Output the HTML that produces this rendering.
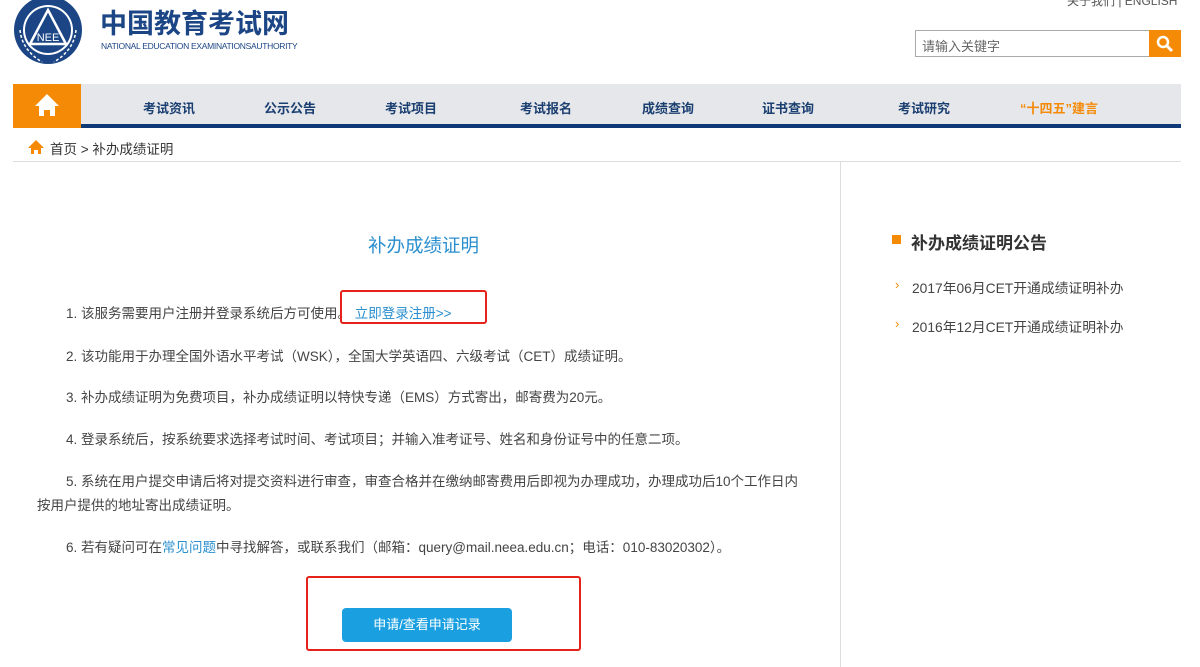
<!DOCTYPE html>
<html><head><meta charset="utf-8"><style>
*{margin:0;padding:0;box-sizing:border-box}
body{width:1200px;height:667px;overflow:hidden;background:#fff;font-family:"Liberation Sans","Noto Sans CJK SC",sans-serif;position:relative;color:#333}
.a{position:absolute;white-space:nowrap}
.nav{position:absolute;left:13px;top:84px;width:1168px;height:44px;background:#e6e7eb;border-bottom:4px solid #0e3a78}
.nav .home{position:absolute;left:0;top:0;width:68px;height:44px;background:#f58a07}
.nav span{position:absolute;top:14px;font-size:13px;font-weight:bold;color:#1b3f70}
.p{position:absolute;left:66px;font-size:13.5px;color:#444;white-space:nowrap}
</style></head><body>
<svg class="a" style="left:12px;top:0" width="72" height="66" viewBox="0 0 72 66">
<circle cx="36" cy="30" r="34" fill="#1b4584"/>
<circle cx="36" cy="30" r="25" fill="#fff"/>
<circle cx="36" cy="30" r="23" fill="#1b4584"/>
<path d="M36 10 L54 44 L18 44 Z" fill="none" stroke="#fff" stroke-width="2.5"/>
<text x="36" y="41" font-size="11" fill="#fff" text-anchor="middle" font-family="Liberation Sans">NEE</text>
<path d="M8 30 Q10 50 30 62 M64 30 Q62 50 42 62" stroke="#fff" stroke-width="1.5" fill="none" stroke-dasharray="3 2"/>
</svg>
<div class="a" style="left:100px;top:8px;font-size:27px;font-weight:bold;color:#1b4584;line-height:32px">中国教育考试网</div>
<div class="a" style="left:101px;top:41px;font-size:8.5px;color:#1b4584;letter-spacing:-0.3px">NATIONAL EDUCATION EXAMINATIONSAUTHORITY</div>
<div class="a" style="left:1067px;top:-8px;font-size:12px;color:#555">关于我们 | ENGLISH</div>
<div class="a" style="left:915px;top:30px;width:234px;height:27px;border:1px solid #aaa;border-right:none;font-size:13px;color:#666;padding:5px 6px">请输入关键字</div>
<div class="a" style="left:1149px;top:30px;width:32px;height:27px;background:#f58a07">
<svg width="32" height="27"><circle cx="14" cy="12" r="5" fill="none" stroke="#fff" stroke-width="2.5"/><path d="M18 16l5 5" stroke="#fff" stroke-width="3"/></svg></div>
<div class="nav"><div class="home"><svg width="68" height="44"><path d="M34 10 L22 22 H26 V32 H31 V26 H37 V32 H42 V22 H46 Z" fill="#fff"/></svg></div>
<span style="left:130px">考试资讯</span><span style="left:251px">公示公告</span><span style="left:372px">考试项目</span><span style="left:507px">考试报名</span><span style="left:629px">成绩查询</span><span style="left:749px">证书查询</span><span style="left:885px">考试研究</span><span style="left:1007px;color:#f58a07">“十四五”建言</span></div>
<svg class="a" style="left:27px;top:139px" width="18" height="16"><path d="M9 1 L1 9 H4 V15 H7 V11 H11 V15 H14 V9 H17 Z" fill="#f58a07"/></svg>
<div class="a" style="left:50px;top:138px;font-size:13.5px;color:#333">首页 &gt; 补办成绩证明</div>
<div class="a" style="left:13px;top:161px;width:1168px;height:1px;background:#ddd"></div>
<div class="a" style="left:840px;top:161px;width:1px;height:506px;background:#ddd"></div>
<div class="a" style="left:368px;top:232px;font-size:18.5px;color:#2a8fcf">补办成绩证明</div>
<div class="p" style="top:302px">1. 该服务需要用户注册并登录系统后方可使用。 <span style="color:#2a8fcf">立即登录注册&gt;&gt;</span></div>
<div class="a" style="left:340px;top:290px;width:147px;height:34px;border:2px solid #e6231b;border-radius:3px"></div>
<div class="p" style="top:345px">2. 该功能用于办理全国外语水平考试（WSK），全国大学英语四、六级考试（CET）成绩证明。</div>
<div class="p" style="top:386px">3. 补办成绩证明为免费项目，补办成绩证明以特快专递（EMS）方式寄出，邮寄费为20元。</div>
<div class="p" style="top:428px">4. 登录系统后，按系统要求选择考试时间、考试项目；并输入准考证号、姓名和身份证号中的任意二项。</div>
<div class="p" style="top:470px">5. 系统在用户提交申请后将对提交资料进行审查，审查合格并在缴纳邮寄费用后即视为办理成功，办理成功后10个工作日内</div>
<div class="p" style="top:494px;left:37px">按用户提供的地址寄出成绩证明。</div>
<div class="p" style="top:536px">6. 若有疑问可在<span style="color:#2a8fcf">常见问题</span>中寻找解答，或联系我们（邮箱：query@mail.neea.edu.cn；电话：010-83020302）。</div>
<div class="a" style="left:306px;top:576px;width:275px;height:75px;border:2px solid #e6231b;border-radius:3px"></div>
<div class="a" style="left:342px;top:608px;width:170px;height:34px;background:#1aa0e0;border-radius:4px;color:#fff;font-size:13px;text-align:center;line-height:34px">申请/查看申请记录</div>
<div class="a" style="left:892px;top:235px;width:9px;height:9px;background:#f58a07"></div>
<div class="a" style="left:911px;top:229px;font-size:17px;font-weight:bold;color:#333">补办成绩证明公告</div>
<div class="a" style="left:895px;top:277px;font-size:13px;color:#f58a07">›</div>
<div class="a" style="left:912px;top:277px;font-size:13.8px;color:#444">2017年06月CET开通成绩证明补办</div>
<div class="a" style="left:895px;top:316px;font-size:13px;color:#f58a07">›</div>
<div class="a" style="left:912px;top:316px;font-size:13.8px;color:#444">2016年12月CET开通成绩证明补办</div>
</body></html>
